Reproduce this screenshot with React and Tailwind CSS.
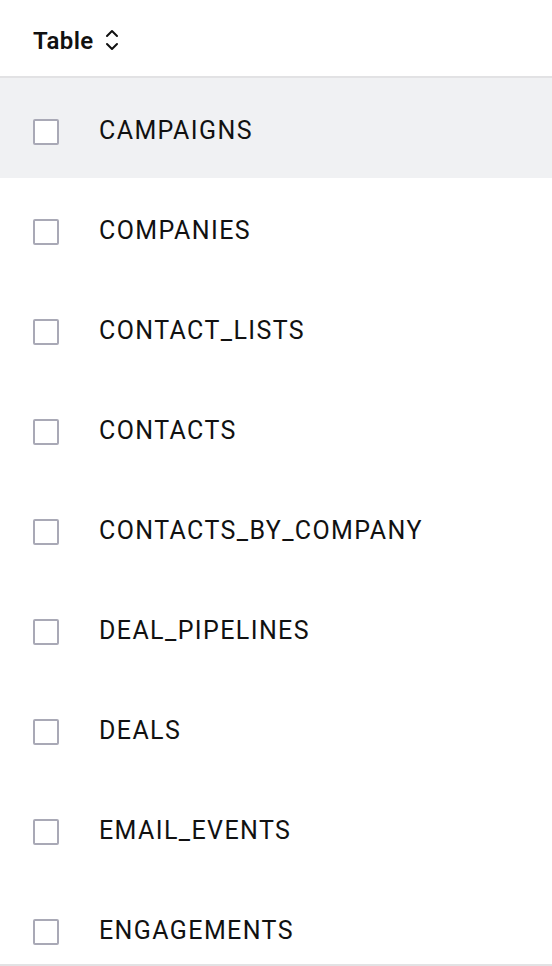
const tables = [
  "CAMPAIGNS",
  "COMPANIES",
  "CONTACT_LISTS",
  "CONTACTS",
  "CONTACTS_BY_COMPANY",
  "DEAL_PIPELINES",
  "DEALS",
  "EMAIL_EVENTS",
  "ENGAGEMENTS",
];

export default function App() {
  return (
    <div
      className="h-[966px] overflow-hidden bg-white border-b-2 border-[#e2e2e4] text-[#111]"
      style={{ fontFamily: "Roboto, 'Liberation Sans', sans-serif" }}
    >
      {/* Header */}
      <div className="h-[78px] border-b-2 border-[#e2e2e4] flex items-center pl-[33px] pt-[6px]">
        <span className="text-[24px] font-semibold tracking-[0.4px]">Table</span>
        <svg className="ml-[10px] mt-[-2px]" width="16" height="26" viewBox="0 0 16 26" fill="none" stroke="#111" strokeWidth="2" strokeLinecap="round" strokeLinejoin="round">
          <path d="M3 9 L8 4 L13 9" />
          <path d="M3 17 L8 22 L13 17" />
        </svg>
      </div>

      {/* Rows */}
      {tables.map((name, i) => (
        <div
          key={name}
          className={`h-[100px] shrink-0 flex items-center pl-[33px] ${i === 0 ? "bg-[#f0f1f3]" : "bg-white"}`}
        >
          <span className="w-[26px] h-[26px] mt-[8px] border-2 border-[#a9a9b6] bg-white rounded-[2px] shrink-0" />
          <span className="ml-[40px] mt-[5px] text-[25px] tracking-[1.4px]">{name}</span>
        </div>
      ))}
    </div>
  );
}
